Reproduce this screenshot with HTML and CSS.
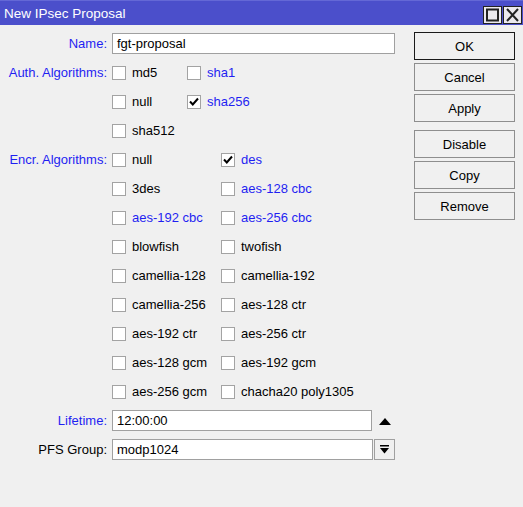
FILE: index.html
```html
<!DOCTYPE html>
<html lang="en">
<head>
  <meta charset="UTF-8">
  <title>New IPsec Proposal</title>
  <link rel="stylesheet" href="styles.css">
</head>
<body>
  <div class="window">
    <div class="titlebar">
      <span class="title">New IPsec Proposal</span>
      <div class="win-btns">
        <span class="win-btn">
          <svg width="17" height="16" viewBox="0 0 17 16"><rect x="3" y="2.5" width="11" height="11" fill="none" stroke="#222" stroke-width="2"/></svg>
        </span>
        <span class="win-btn">
          <svg width="17" height="16" viewBox="0 0 17 16"><path d="M3 2 L14 14 M14 2 L3 14" stroke="#222" stroke-width="2"/></svg>
        </span>
      </div>
    </div>

    <div class="content">
      <div class="form">
        <div class="lbl changed">Name:</div>
        <div class="field">
          <div class="input wide">fgt-proposal</div>
        </div>

        <div class="lbl changed rows3">Auth. Algorithms:</div>
        <div class="checks auth">
          <div class="cb"><span class="box"></span>md5</div>
          <div class="cb changed"><span class="box"></span>sha1</div>
          <div class="cb"><span class="box"></span>null</div>
          <div class="cb changed"><span class="box"><svg width="12" height="12" viewBox="0 0 12 12"><path d="M2 5.5 L4.8 8.5 L10 2.5" fill="none" stroke="#000" stroke-width="2"/></svg></span>sha256</div>
          <div class="cb"><span class="box"></span>sha512</div>
        </div>

        <div class="lbl changed rows9">Encr. Algorithms:</div>
        <div class="checks encr">
          <div class="cb"><span class="box"></span>null</div>
          <div class="cb changed"><span class="box"><svg width="12" height="12" viewBox="0 0 12 12"><path d="M2 5.5 L4.8 8.5 L10 2.5" fill="none" stroke="#000" stroke-width="2"/></svg></span>des</div>
          <div class="cb"><span class="box"></span>3des</div>
          <div class="cb changed"><span class="box"></span>aes-128 cbc</div>
          <div class="cb changed"><span class="box"></span>aes-192 cbc</div>
          <div class="cb changed"><span class="box"></span>aes-256 cbc</div>
          <div class="cb"><span class="box"></span>blowfish</div>
          <div class="cb"><span class="box"></span>twofish</div>
          <div class="cb"><span class="box"></span>camellia-128</div>
          <div class="cb"><span class="box"></span>camellia-192</div>
          <div class="cb"><span class="box"></span>camellia-256</div>
          <div class="cb"><span class="box"></span>aes-128 ctr</div>
          <div class="cb"><span class="box"></span>aes-192 ctr</div>
          <div class="cb"><span class="box"></span>aes-256 ctr</div>
          <div class="cb"><span class="box"></span>aes-128 gcm</div>
          <div class="cb"><span class="box"></span>aes-192 gcm</div>
          <div class="cb"><span class="box"></span>aes-256 gcm</div>
          <div class="cb"><span class="box"></span>chacha20 poly1305</div>
        </div>

        <div class="lbl changed">Lifetime:</div>
        <div class="field">
          <div class="input lifetime">12:00:00</div>
          <span class="spin">
            <svg width="12" height="7" viewBox="0 0 12 7"><path d="M0 7 L6 0 L12 7 Z" fill="#000"/></svg>
          </span>
        </div>

        <div class="lbl">PFS Group:</div>
        <div class="field">
          <div class="input pfs">modp1024</div>
          <span class="drop">
            <svg width="9" height="9" viewBox="0 0 9 9"><rect x="0" y="0" width="9" height="1.5" fill="#000"/><path d="M0 3 L9 3 L4.5 8.5 Z" fill="#000"/></svg>
          </span>
        </div>
      </div>

      <div class="buttons">
        <div class="btn default">OK</div>
        <div class="btn">Cancel</div>
        <div class="btn">Apply</div>
        <div class="btn sep">Disable</div>
        <div class="btn">Copy</div>
        <div class="btn">Remove</div>
      </div>
    </div>
  </div>
</body>
</html>
```

FILE: styles.css
```css
html, body {
  margin: 0;
  padding: 0;
  background: #f0f0f0;
  font-family: 'Liberation Sans', Arial, sans-serif;
  font-size: 13px;
  color: #000;
}
.window {
  width: 523px;
  height: 507px;
  overflow: hidden;
  background: #f0f0f0;
}
.titlebar {
  height: 24px;
  border-top: 1px solid #6468d6;
  background: #4b4fcb;
  color: #fff;
  display: flex;
  align-items: center;
  justify-content: space-between;
  padding-left: 4px;
  box-sizing: content-box;
}
.title {
  font-size: 13.5px;
  margin-top: 1px;
}
.win-btns {
  display: flex;
  gap: 1px;
  padding-right: 1px;
  margin-top: 3px;
}
.win-btn {
  width: 17px;
  height: 16px;
  border: 1px solid #222;
  background: #ebe9ed;
  display: flex;
}
.content {
  display: flex;
  padding-top: 4px;
}
.form {
  width: 395px;
  display: grid;
  grid-template-columns: 107px 1fr;
  column-gap: 5px;
  grid-auto-rows: 29px;
  align-content: start;
}
.lbl {
  grid-column: 1;
  text-align: right;
  line-height: 29px;
  white-space: nowrap;
}
.lbl.rows3 {
  grid-row: span 3;
}
.lbl.rows9 {
  grid-row: span 9;
}
.changed {
  color: #1f1ff2;
}
.field {
  grid-column: 2;
  display: flex;
  align-items: center;
}
.input {
  height: 21px;
  box-sizing: border-box;
  border: 1px solid #a0a0a0;
  background: #fff;
  padding: 0 4px;
  line-height: 19px;
}
.input.wide {
  width: 283px;
}
.input.lifetime {
  width: 260px;
}
.input.pfs {
  width: 261px;
}
.spin {
  display: flex;
  margin-left: 7px;
  margin-top: 1px;
}
.drop {
  width: 21px;
  height: 21px;
  box-sizing: border-box;
  border: 1px solid #a0a0a0;
  margin-left: 1px;
  display: flex;
  align-items: center;
  justify-content: center;
}
.checks {
  grid-column: 2;
  grid-row: span 3;
  display: grid;
  grid-auto-rows: 29px;
}
.checks.auth {
  grid-template-columns: 75px auto;
}
.checks.encr {
  grid-row: span 9;
  grid-template-columns: 109px auto;
}
.cb {
  display: flex;
  align-items: center;
  white-space: nowrap;
}
.box {
  width: 14px;
  height: 14px;
  box-sizing: border-box;
  border: 1px solid #a3a3a3;
  background: #fff;
  margin-right: 6px;
  display: flex;
  align-items: center;
  justify-content: center;
}
.buttons {
  margin-left: 19px;
  margin-top: 3px;
  width: 101px;
  display: flex;
  flex-direction: column;
  gap: 3px;
}
.btn {
  height: 28px;
  box-sizing: border-box;
  border: 1px solid #8e8e8e;
  display: flex;
  align-items: center;
  justify-content: center;
  color: #000;
}
.btn.default {
  border-color: #1a1a1a;
}
.btn.sep {
  margin-top: 5px;
}
```
